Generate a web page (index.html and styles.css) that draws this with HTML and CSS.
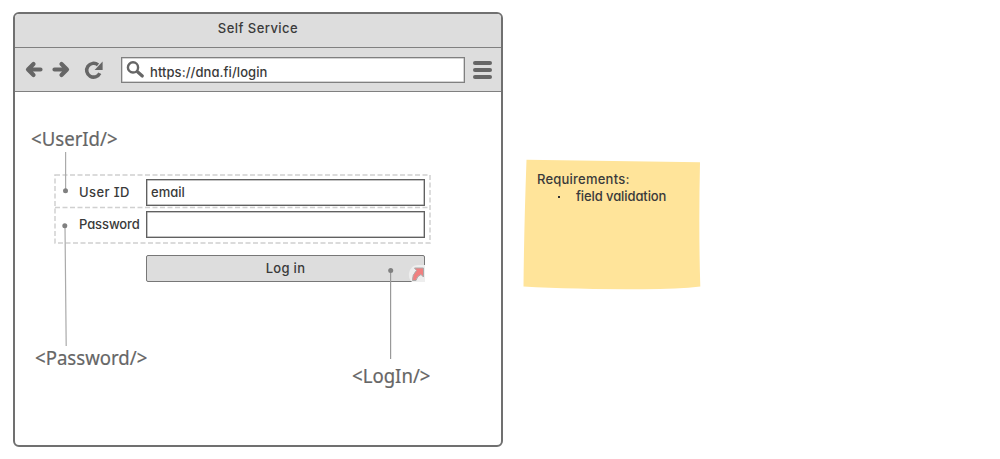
FILE: index.html
```html
<!DOCTYPE html>
<html lang="en">
<head>
<meta charset="utf-8">
<title>Self Service</title>
<link rel="stylesheet" href="styles.css">
</head>
<body>
<main class="board">
  <section class="window">
    <header class="titlebar"><span class="title">Self Service</span></header>
    <nav class="toolbar">
      <svg class="nav-icons" width="80" height="24" viewBox="0 0 80 24">
        <g fill="none" stroke="#666" stroke-width="4.200" stroke-linecap="round" stroke-linejoin="round">
          <path d="M9.500 6 4 11.500l5.500 5.500M4.500 11.500h12" />
          <path d="M37.500 6l5.500 5.500-5.500 5.500M42.500 11.500H30.500" />
          <path d="M75.800 15.200a6.900 6.900 0 1 1-1.800-8.300" stroke-width="3.500" stroke-linecap="butt" />
        </g>
        <path d="M78.600 3.500v8.500h-8z" fill="#666" />
      </svg>
      <div class="address">
        <svg width="20" height="20" viewBox="0 0 20 20">
          <circle cx="7" cy="6.400" r="5.100" fill="none" stroke="#666" stroke-width="2.400" />
          <path d="M11.500 10.800l4.800 4.200" stroke="#666" stroke-width="3.200" stroke-linecap="round" />
        </svg>
        <span class="url">https://dna.fi/login</span>
      </div>
      <div class="menu"><i></i><i></i><i></i></div>
    </nav>
    <form class="form">
      <div class="group">
        <svg class="outline" width="378" height="71" viewBox="0 0 378 71">
          <path d="M1 1H376V69H1zM1 33.500H376" fill="none" stroke="#d0d0d0" stroke-width="1.500" stroke-dasharray="5 2.500" />
        </svg>
        <div class="row"><span class="label user">User ID</span><div class="input"><span class="value">email</span></div></div>
        <div class="row second"><span class="label pass">Password</span><div class="input"></div></div>
      </div>
      <div class="button"><span class="login">Log in</span>
        <svg class="link-badge" width="18" height="18" viewBox="0 0 18 18">
          <path d="M17 18H4Q0 14 1 9Q3 1 10 1H17z" fill="#eee" />
          <path d="M6.500 4H15.500V13L13 10.500Q9 12 8 16.500H4.500Q4 11 8.500 6.500z" fill="#f08080" stroke="#aaa" stroke-width="1" stroke-linejoin="round" />
        </svg>
      </div>
    </form>
  </section>
  <aside class="note">
    <svg class="paper" width="180" height="134" viewBox="0 0 180 134">
      <path d="M3.500 .8L177 3.300Q175.500 70 177.300 127.500Q155 130.300 120 130.300Q50 130.300 .5 127.500Q1 70 3.500 .8z" fill="#ffe49a" />
    </svg>
    <div class="note-text">
      <p class="heading">Requirements:</p>
      <p class="item"><span class="bullet"></span><span class="item-text">field validation</span></p>
    </div>
  </aside>
  <svg class="leaders" width="503" height="400" viewBox="0 0 503 400">
    <g stroke="#aaa" stroke-width="1.200"><path d="M65.600 152V190M65 226L66.200 346" /><path d="M390.600 271V359" stroke="#999" /></g>
    <g fill="#808080"><circle cx="65.500" cy="190.700" r="2.500" /><circle cx="64.800" cy="225.800" r="2.500" /><circle cx="390.700" cy="270.600" r="2.500" /></g>
  </svg>
  <span class="tag tag-user">&lt;UserId/&gt;</span>
  <span class="tag tag-pass">&lt;Password/&gt;</span>
  <span class="tag tag-login">&lt;LogIn/&gt;</span>
</main>
</body>
</html>
```
FILE: styles.css
```css
* { box-sizing: border-box; }
body {
  margin: 0;
  background: #fff;
  color: #3a3a3a;
  font: 500 13px/17px Inter, sans-serif;
  font-feature-settings: "cv11";
}
.board {
  position: relative;
  display: flex;
  align-items: flex-start;
  width: 1000px;
  height: 459px;
  padding: 12px 0 0 13px;
}
.window {
  width: 490px;
  height: 435px;
  border: 2px solid #707070;
  border-radius: 6px;
  overflow: hidden;
}
.titlebar {
  height: 34px;
  padding-top: 6px;
  text-align: center;
  background: #ddd;
  border-bottom: 1px solid #808080;
}
.title { letter-spacing: .45px; }
.toolbar {
  display: flex;
  align-items: flex-start;
  height: 44px;
  padding: 9px 8px 0 9px;
  background: #ddd;
  border-bottom: 1px solid #808080;
}
.nav-icons { margin-top: 1px; flex: none; }
.address {
  display: flex;
  width: 344px;
  height: 26px;
  margin-left: 17px;
  padding: 3px 0 0 4px;
  background: #fff;
  border: 1px solid #808080;
  box-shadow: inset 0 0 0 .5px #aaa;
}
.address svg { flex: none; }
.url { margin: 3px 0 0 4px; letter-spacing: .07px; }
.menu {
  display: flex;
  flex-direction: column;
  gap: 3px;
  margin: 4px 0 0 8px;
}
.menu i {
  width: 19px;
  height: 4px;
  border-radius: 2px;
  background: #666;
}
.form { padding: 82px 0 0 39px; }
.group {
  position: relative;
  width: 377px;
  height: 70px;
  padding: 1px;
}
.outline { position: absolute; left: 0; top: 0; }
.row {
  display: flex;
  height: 33px;
  padding: 4px 0 0 24px;
}
.row.second { padding-top: 3px; }
.label { width: 67px; padding-top: 5px; white-space: nowrap; }
.user { letter-spacing: .4px; font-feature-settings: "cv11", "cv08"; }
.pass { letter-spacing: -.1px; }
.input {
  width: 279px;
  height: 27px;
  padding: 4px 0 0 4px;
  border: 1px solid #606060;
  box-shadow: inset 0 0 0 .5px #888;
  background: #fff;
}
.button {
  position: relative;
  width: 279px;
  height: 27px;
  margin: 11px 0 0 92px;
  padding-top: 4px;
  text-align: center;
  background: #ddd;
  border: 1px solid #777;
  border-radius: 2px;
}
.login { letter-spacing: .3px; }
.link-badge { position: absolute; right: -2px; bottom: -1px; }
.note { position: relative; margin: 147px 0 0 20px; width: 180px; height: 134px; }
.paper { display: block; }
.note-text { position: absolute; left: 14px; top: 12px; }
.note-text p { margin: 0; white-space: nowrap; }
.heading { letter-spacing: .22px; }
.item { display: flex; align-items: center; }
.item-text { letter-spacing: -.1px; }
.bullet { width: 2px; height: 2px; margin: 0 16px 0 21px; background: #333; }
.leaders { position: absolute; left: 0; top: 0; }
.tag {
  position: absolute;
  color: #666;
  font: 400 20px/26px "Noto Sans", sans-serif;
  -webkit-text-stroke: .2px #666;
  white-space: nowrap;
  transform-origin: left center;
  transform: scaleX(.93);
}
.tag-user { left: 30.500px; top: 126px; }
.tag-pass { left: 35px; top: 345px; }
.tag-login { left: 352px; top: 363px; }
```
